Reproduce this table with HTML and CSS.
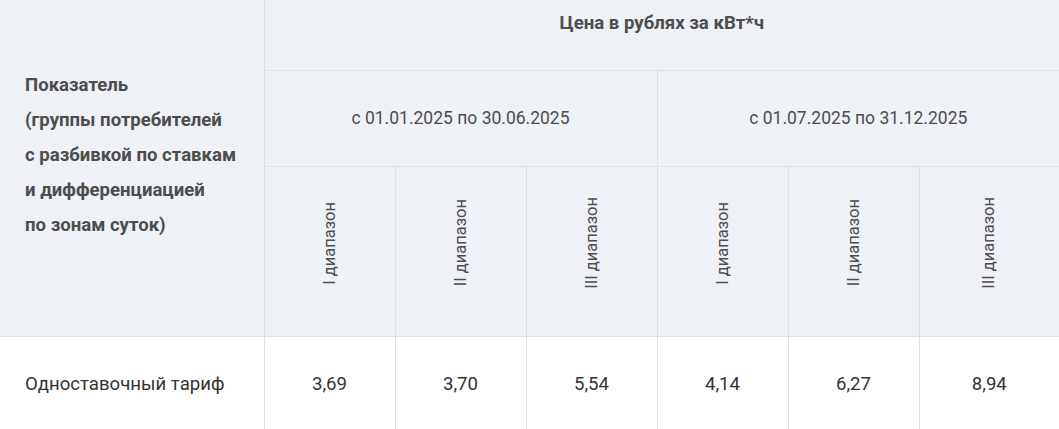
FILE: index.html
```html
<!DOCTYPE html>
<html lang="ru">
<head>
<meta charset="utf-8">
<link rel="stylesheet" href="styles.css">
</head>
<body>
<table class="tariff">
  <colgroup>
    <col class="c-name">
    <col class="c-val"><col class="c-val"><col class="c-val">
    <col class="c-val"><col class="c-val"><col class="c-last">
  </colgroup>
  <thead>
    <tr class="r-top">
      <th rowspan="3" class="h-name">Показатель<br>(группы потребителей<br>с разбивкой по ставкам<br>и дифференциацией<br>по зонам суток)</th>
      <th colspan="6" class="h-title">Цена в рублях за кВт*ч</th>
    </tr>
    <tr class="r-period">
      <th colspan="3" class="h-period">с 01.01.2025 по 30.06.2025</th>
      <th colspan="3" class="h-period">с 01.07.2025 по 31.12.2025</th>
    </tr>
    <tr class="r-range">
      <th class="h-range"><span class="vert">I диапазон</span></th>
      <th class="h-range"><span class="vert">II диапазон</span></th>
      <th class="h-range"><span class="vert">III диапазон</span></th>
      <th class="h-range"><span class="vert">I диапазон</span></th>
      <th class="h-range"><span class="vert">II диапазон</span></th>
      <th class="h-range"><span class="vert">III диапазон</span></th>
    </tr>
  </thead>
  <tbody>
    <tr class="r-body">
      <td class="d-name">Одноставочный тариф</td>
      <td>3,69</td>
      <td>3,70</td>
      <td>5,54</td>
      <td>4,14</td>
      <td>6,27</td>
      <td>8,94</td>
    </tr>
  </tbody>
</table>
</body>
</html>
```
FILE: styles.css
```css
html, body {
  margin: 0;
  padding: 0;
  background: #ffffff;
}
body {
  font-family: Roboto, "Liberation Sans", Arial, sans-serif;
  color: #333333;
}
.tariff {
  width: 1059px;
  border-collapse: collapse;
  table-layout: fixed;
}
.c-name { width: 264px; }
.c-val { width: 131px; }
.c-last { width: 140px; }

.tariff th,
.tariff td {
  border: 1px solid #dfe1e5;
  padding: 0;
}
.tariff tr > :first-child { border-left: none; }
.tariff tr > :last-child { border-right: none; }
.r-top > th { border-top: none; }

.r-top { height: 70px; }
.r-period { height: 96px; }
.r-range { height: 170px; }
.r-body { height: 96px; }

.tariff thead th {
  background: #eef1f6;
  color: #4d4d4d;
  font-size: 18.6px;
}
.tariff thead th.h-name {
  text-align: left;
  font-weight: 700;
  line-height: 35px;
  padding: 68px 10px 0 25px;
  vertical-align: top;
}
.tariff thead th.h-title {
  font-weight: 700;
  vertical-align: top;
  padding-top: 12px;
  line-height: 22px;
}
.tariff thead th.h-period {
  font-weight: 400;
  font-size: 17.5px;
  vertical-align: middle;
}
.tariff thead th.h-range {
  font-weight: 400;
  font-size: 16.5px;
  vertical-align: middle;
  padding-bottom: 12px;
}
.vert {
  display: inline-block;
  writing-mode: vertical-rl;
  transform: rotate(180deg);
  line-height: 20px;
}
.r-body td {
  text-align: center;
  vertical-align: middle;
  font-size: 18.6px;
  color: #333333;
}
.r-body .d-name {
  text-align: left;
  padding-left: 25px;
}
```
